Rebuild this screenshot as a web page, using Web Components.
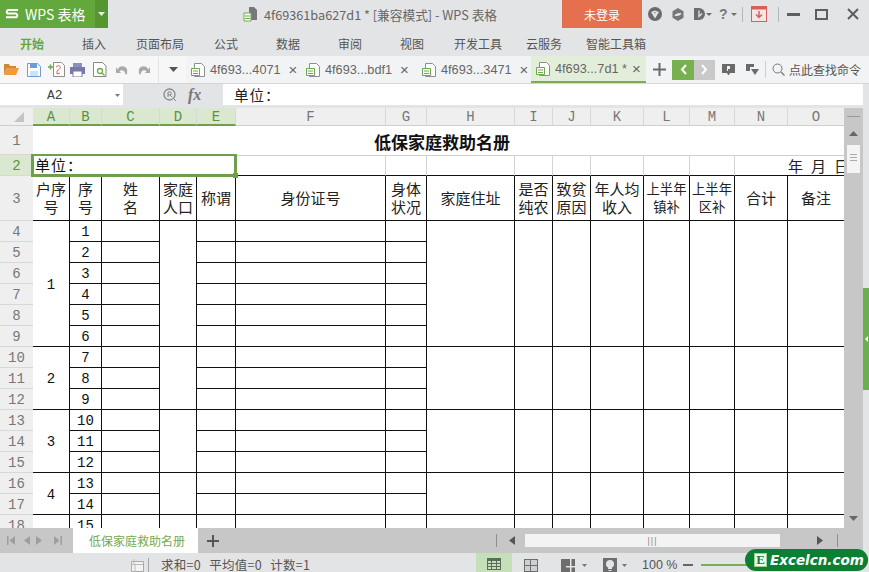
<!DOCTYPE html>
<html>
<head>
<meta charset="utf-8">
<title>WPS 表格</title>
<style>
    html, body { margin: 0; height: 572px; overflow: hidden; background: #e3e4e6; }
    body { font-family: "Noto Sans CJK SC", "Liberation Sans", sans-serif; width: 869px; position: relative; }
</style>
</head>
<body>
<wps-titlebar></wps-titlebar>
<wps-menubar></wps-menubar>
<wps-tabstrip></wps-tabstrip>
<wps-formula></wps-formula>
<wps-sheet></wps-sheet>
<wps-sheetbar></wps-sheetbar>
<wps-status></wps-status>
<site-badge></site-badge>

<script>
class WpsTitlebar extends HTMLElement {
    constructor() {
        super();
        this.attachShadow({ mode: 'open' }).innerHTML = `
        <style>
            :host { display: flex; height: 28px; align-items: stretch; color: #666; font-size: 12.7px; }
            .brand { width: 95px; background: #62a83c; color: #fff; display: flex; align-items: center; gap: 6px; padding-left: 5px; box-sizing: border-box; font-size: 14px; white-space: nowrap; }
            .drop { width: 13px; background: #55962f; display: flex; align-items: center; justify-content: center; }
            .title { flex: 1; display: flex; align-items: center; padding-left: 135px; gap: 6px; white-space: nowrap; }
            .login { width: 80px; background: #e4704e; color: #fff; font-size: 12px; display: flex; align-items: center; justify-content: center; }
            .tools { width: 227px; display: flex; align-items: center; box-sizing: border-box; padding-left: 6px; }
            svg { display: block; flex: none; }
            .sep { width: 1px; height: 15px; background: #b5b5b5; }
        </style>
        <div class="brand">
            <svg width="14" height="12" viewBox="0 0 14 12"><path d="M13 2H3.500a1.600 1.600 0 0 0 0 3.600h7a1.600 1.600 0 0 1 0 3.600H1" fill="none" stroke="#fff" stroke-width="2"/></svg>
            <span>WPS 表格</span>
        </div>
        <div class="drop"><svg width="7" height="4"><path d="M0 0h7L3.500 4z" fill="#e8f2df"/></svg></div>
        <div class="title">
            <svg width="15" height="16" viewBox="0 0 15 16"><path d="M6 1h5l3 3v10H6z" fill="#77777b"/><path d="M1 7h7v8H1z" fill="#fff" stroke="#6fa84c"/><path d="M2 10h5M2 12.500h5" stroke="#6fa84c"/></svg>
            <span>4f69361ba627d1 * [兼容模式] - WPS 表格</span>
        </div>
        <div class="login">未登录</div>
        <div class="tools">
            <svg width="14" height="14" viewBox="0 0 14 14"><circle cx="7" cy="7" r="7" fill="#6b6b6e"/><path d="M3 5l4-1.500L11 5 7 11.500z" fill="#e3e4e6"/><path d="M7 6.500l1.500-1H5.500z" fill="#6b6b6e"/></svg>
            <svg width="12" height="13" viewBox="0 0 12 13" style="margin-left:10px"><path d="M6 0l5.500 3.200v6.600L6 13 .5 9.800V3.200z" fill="#77777a"/><path d="M2.500 8c1-3 4-3 7-3-1 3-4 3-7 3z" fill="#e3e4e6"/></svg>
            <svg width="12" height="14" viewBox="0 0 12 14" style="margin-left:10px"><path d="M0 1h5a6 6 0 0 1 0 12H0z" fill="#6d6d70"/><path d="M5 3.500v6l3-3" fill="none" stroke="#e3e4e6" stroke-width="1.300"/></svg>
            <svg width="6" height="3"><path d="M0 0h6L3 3z" fill="#6d6d70"/></svg>
            <span style="margin-left:7px;font:700 14px 'Liberation Sans',sans-serif;color:#77777a">?</span>
            <svg width="6" height="3" style="margin-left:3px"><path d="M0 0h6L3 3z" fill="#6d6d70"/></svg>
            <span class="sep" style="margin-left:5px"></span>
            <svg width="16" height="16" viewBox="0 0 16 16" style="margin-left:8px"><rect x=".5" y=".5" width="15" height="15" fill="#f4e6e4" stroke="#d9605a"/><path d="M1 .5h14v3H1z" fill="#d9605a"/><path d="M8 5v6M5 8.500l3 3 3-3" fill="none" stroke="#d9605a" stroke-width="1.500"/></svg>
            <span class="sep" style="margin-left:11px"></span>
            <svg width="13" height="3" style="margin-left:8px"><path d="M0 0h13v3H0z" fill="#5e5e60"/></svg>
            <svg width="13" height="11" viewBox="0 0 13 11" style="margin-left:15px"><rect x="1" y="1" width="11" height="9" fill="none" stroke="#5e5e60" stroke-width="2"/></svg>
            <svg width="12" height="12" viewBox="0 0 12 12" style="margin-left:19px"><path d="M1 1l10 10M11 1L1 11" stroke="#5e5e60" stroke-width="2"/></svg>
        </div>`;
    }
}

class WpsMenubar extends HTMLElement {
    constructor() {
        super();
        const items = [['开始', 20], ['插入', 82], ['页面布局', 136], ['公式', 214], ['数据', 276], ['审阅', 338], ['视图', 400], ['开发工具', 454], ['云服务', 526], ['智能工具箱', 586]];
        // widths are the distance to the next label, so it stays in flow
        const html = items.map(([t, x], i) => {
            const next = items[i + 1] ? items[i + 1][1] : x + 70;
            return `<span class="${i === 0 ? 'on' : ''}" style="width:${next - x}px">${t}</span>`;
        }).join('');
        this.attachShadow({ mode: 'open' }).innerHTML = `
        <style>
            :host { display: flex; height: 28px; align-items: center; padding: 3px 0 0 20px; font-size: 12px; color: #555; box-sizing: border-box; }
            span { flex: none; white-space: nowrap; }
            .on { color: #6aa53c; font-weight: 700; }
        </style>${html}`;
    }
}

const DOC_ICON = `<svg width="14" height="14" viewBox="0 0 14 14" style="flex:none"><path d="M3.500.5h7l3 3v10h-10z" fill="#fff" stroke="#8e8e8e"/><path d="M.5 5.500h8v7h-8z" fill="#fff" stroke="#6fa84c"/><path d="M2 8h5M2 10.500h5" stroke="#6fa84c"/></svg>`;

class WpsTab extends HTMLElement {
    constructor() {
        super();
        this.attachShadow({ mode: 'open' }).innerHTML = `
        <style>
            :host { display: flex; align-items: center; height: 27px; width: 115px; box-sizing: border-box; padding-left: 5px; gap: 5px; color: #666; font: 12.700px "Liberation Sans", sans-serif; white-space: nowrap; flex: none; }
            :host([active]) { background: #e3eeda; border-bottom: 2px solid #78ae55; }
            .x { font-size: 15px; margin-left: 3px; color: #666; }
            :host([active]) .x { margin-left: 0; }
        </style>
        ${DOC_ICON}<slot></slot><span class="x">×</span>`;
    }
}

class WpsTabstrip extends HTMLElement {
    constructor() {
        super();
        this.attachShadow({ mode: 'open' }).innerHTML = `
        <style>
            :host { display: flex; height: 28px; background: #f2f3f4; align-items: flex-start; box-sizing: border-box; border-bottom: 1px solid #d6d6d6; }
            svg { display: block; flex: none; }
            .quick { width: 186px; height: 27px; background: #f7f7f7; display: flex; align-items: center; box-sizing: border-box; padding-left: 4px; flex: none; }
            .tabs { display: flex; }
            .right { display: flex; align-items: center; height: 27px; flex: 1; }
            .nav { height: 20px; display: flex; align-items: center; justify-content: center; }
            .find { font-size: 12px; color: #555; margin-left: 4px; white-space: nowrap; }
            .sep { width: 1px; height: 17px; background: #cfcfcf; }
        </style>
        <div class="quick">
            <svg width="15" height="13" viewBox="0 0 15 13"><path d="M0 1h5l1 2h6v2H3L0 12z" fill="#c98a3a"/><path d="M3 5h12l-3 7H0z" fill="#f29a3d"/></svg>
            <svg width="14" height="14" viewBox="0 0 14 14" style="margin-left:8px"><path d="M.5.5h10l3 3v10H.5z" fill="#fff" stroke="#6f9bd6"/><path d="M3 1h7v4H3z" fill="#6f9bd6"/><path d="M3 8h8v5H3z" fill="#cfe0f3"/></svg>
            <svg width="17" height="15" viewBox="0 0 17 15" style="margin-left:7px"><path d="M5.500.5h8l3 3v11h-11z" fill="#fff" stroke="#8e8e8e"/><path d="M8 5c3-3 6 0 3 2.500L9 9v3M9 12l3-1" fill="none" stroke="#d9605a"/><path d="M0 5h5M2.500 2.500v5" stroke="#6fa84c" stroke-width="1.500"/></svg>
            <svg width="15" height="14" viewBox="0 0 15 14" style="margin-left:5px"><path d="M3 0h9v4H3z" fill="#8d8fb8"/><path d="M0 4h15v7H0z" fill="#777aa8"/><path d="M3 8h9v6H3z" fill="#fff" stroke="#777aa8"/></svg>
            <svg width="14" height="15" viewBox="0 0 14 15" style="margin-left:8px"><path d="M.5.5h9l3.500 3.500v10.500H.5z" fill="#fff" stroke="#888"/><circle cx="7" cy="9" r="2.500" fill="none" stroke="#6fa84c" stroke-width="1.300"/><path d="M9 11l2.500 2.500" stroke="#6fa84c" stroke-width="1.300"/></svg>
            <svg width="12" height="12" viewBox="0 0 14 13" style="margin-left:9px"><path d="M2 6c2-5 9-5 11 0v5l-2 1c0-4-4-7-7-4l2 2H0V3z" fill="#a9a9ab"/></svg>
            <svg width="12" height="12" viewBox="0 0 14 13" style="transform:scaleX(-1);margin-left:10px"><path d="M2 6c2-5 9-5 11 0v5l-2 1c0-4-4-7-7-4l2 2H0V3z" fill="#a9a9ab"/></svg>
            <span class="sep" style="margin-left:8px;height:26px;background:#e3e3e3"></span>
            <svg width="9" height="5" style="margin-left:10px"><path d="M0 0h9L4.500 5z" fill="#555"/></svg>
        </div>
        <div class="tabs">
            <wps-tab>4f693...4071</wps-tab>
            <wps-tab style="width:116px">4f693...bdf1</wps-tab>
            <wps-tab style="width:114px">4f693...3471</wps-tab>
            <wps-tab active>4f693...7d1 *</wps-tab>
        </div>
        <div class="right">
            <svg width="13" height="13" style="margin-left:7px"><path d="M5.500 0h2v5.500H13v2H7.500V13h-2V7.500H0v-2h5.500z" fill="#6a6a6a"/></svg>
            <div class="nav" style="margin-left:6px;width:22px;background:#76b04f"><svg width="7" height="11"><path d="M6 1L2 5.500 6 10" fill="none" stroke="#fff" stroke-width="2"/></svg></div>
            <div class="nav" style="width:21px;background:#c9c9c9"><svg width="7" height="11"><path d="M1 1l4 4.500L1 10" fill="none" stroke="#fff" stroke-width="2"/></svg></div>
            <svg width="13" height="13" viewBox="0 0 13 13" style="margin-left:7px"><path d="M0 1h13v9H8l-1 2H6L5 10H0z" fill="#6a6a6a"/><path d="M5 3h3v3H6v2H5z" fill="#f2f3f4"/></svg>
            <svg width="13" height="11" viewBox="0 0 13 11" style="margin-left:11px"><path d="M0 0h8v3H4v4H0z" fill="#6a6a6a"/><path d="M5 5h8l-4 6z" fill="#6a6a6a"/></svg>
            <span class="sep" style="margin-left:6px"></span>
            <svg width="13" height="13" viewBox="0 0 13 13" style="margin-left:6px"><circle cx="5.500" cy="5.500" r="4.500" fill="none" stroke="#777"/><path d="M9 9l3.500 3.500" stroke="#777" stroke-width="1.300"/></svg>
            <span class="find">点此查找命令</span>
        </div>`;
    }
}

class WpsFormula extends HTMLElement {
    constructor() {
        super();
        this.attachShadow({ mode: 'open' }).innerHTML = `
        <style>
            :host { display: flex; height: 24px; align-items: stretch; box-sizing: border-box; padding: 0 0 3px; background: #e3e4e6; color: #333; }
            .name { width: 123px; background: #fff; display: flex; align-items: center; padding: 2px 0 0 47px; box-sizing: border-box; font: 13px "Liberation Mono", monospace; color: #444; }
            .name svg { margin-left: auto; margin-right: 3px; }
            .mid { width: 100px; display: flex; align-items: center; box-sizing: border-box; padding-left: 40px; gap: 11px; color: #777; }
            .mid i { font: italic 700 16px "Liberation Serif", serif; color: #777; }
            .box { width: 640px; background: #fff; display: flex; align-items: center; padding-left: 11px; box-sizing: border-box; font-size: 14.500px; letter-spacing: 1px; color: #222; }
        </style>
        <div class="name">A2<svg width="5" height="3"><path d="M0 0h5L2.500 3z" fill="#777"/></svg></div>
        <div class="mid">
            <svg width="14" height="14" viewBox="0 0 14 14"><circle cx="6.500" cy="6.500" r="5.500" fill="none" stroke="#888" stroke-width="1.300"/><path d="M5 9V4h2a1.300 1.300 0 0 1 0 2.800H5M7 7l2 2M10 10l3 3" fill="none" stroke="#888"/></svg>
            <i>fx</i>
        </div>
        <div class="box">单位：</div>`;
    }
}

// Column widths and row heights of the visible part of the sheet
const COLS = [33, 37, 32, 58, 37, 39, 150, 41, 88, 38, 38, 53, 46, 45, 53, 57];
const ROWS = [18, 29, 21, 45, 21, 21, 21, 21, 21, 21, 21, 21, 21, 21, 21, 21, 21, 21, 21];
const LETTERS = 'ABCDEFGHIJKLMNO'.split('');

class WpsSheet extends HTMLElement {
    constructor() {
        super();
        const cells = [];
        const put = (c, r, text, cls = '', cs = 1, rs = 1) => {
            cells.push(`<div class="c ${cls}" style="grid-column:${c + 1}/span ${cs};grid-row:${r + 1}/span ${rs}">${text}</div>`);
        };
        // corner and headers
        cells.push(`<div class="corner" style="grid-column:1;grid-row:1"><svg width="10" height="10"><path d="M10 0v10H0z" fill="#c4c4c4"/></svg></div>`);
        LETTERS.forEach((l, i) => put(i + 1, 0, l, 'ch' + (i < 5 ? ' sel' : '')));
        ROWS.slice(1).forEach((h, i) => put(0, i + 1, i + 1, 'rh' + (i === 1 ? ' sel' : '')));
        // row 1 and 2
        put(1, 1, '低保家庭救助名册', 'title', 15);
        put(1, 2, '单位：', 'unit', 5);
        [6, 7, 8, 9, 10, 11, 12, 13].forEach((c) => put(c, 2, '', 'faint'));
        put(14, 2, '<span>年</span><span>月</span><span>日</span>', 'date', 2);
        // column heads
        ['户序<br>号', '序<br>号', '姓<br>名', '家庭<br>人口', '称谓', '身份证号', '身体<br>状况', '家庭住址', '是否<br>纯农', '致贫<br>原因', '年人均<br>收入', '<small>上半年<br>镇补</small>', '<small>上半年<br>区补</small>', '合计', '备注']
            .forEach((t, i) => put(i + 1, 3, t, 'b head'));
        // family groups: household no, first row index, row span
        [['1', 4, 6], ['2', 10, 3], ['3', 13, 3], ['4', 16, 2], ['', 18, 1]].forEach(([no, r, span]) => {
            put(1, r, no, 'b num', 1, span);
            [4, 8, 9, 10, 11, 12, 13, 14, 15].forEach((c) => put(c, r, '', 'b', 1, span));
        });
        // person rows
        for (let i = 0; i < 15; i++) {
            const r = 4 + i;
            put(2, r, i + 1, 'b num');
            [3, 5, 6, 7].forEach((c) => put(c, r, '', 'b'));
        }
        this.attachShadow({ mode: 'open' }).innerHTML = `
        <style>
            :host { display: block; height: 420px; position: relative; overflow: hidden; background: #fff; }
            .grid { display: grid; grid-template-columns: ${COLS.map((w) => w + 'px').join(' ')}; grid-template-rows: ${ROWS.map((h) => h + 'px').join(' ')}; width: 845px; font-size: 15px; color: #222; }
            .c { box-sizing: border-box; display: flex; align-items: center; justify-content: center; text-align: center; line-height: 18px; overflow: hidden; min-width: 0; white-space: nowrap; }
            .corner { background: #efefef; border-bottom: 1px solid #cfcfcf; display: flex; align-items: center; justify-content: center; box-sizing: border-box; padding-left: 4px; }
            .ch { background: #efefef; border-right: 1px solid #d8d8d8; border-bottom: 1px solid #cfcfcf; color: #777; font: 14px "Liberation Mono", monospace; padding-top: 1px; }
            .ch.sel { background: #d9e8cf; color: #5f8f42; border-bottom: 2px solid #6f9f4d; }
            .rh { background: #efefef; color: #777; border-bottom: 1px solid #d8d8d8; font: 14px "Liberation Mono", monospace; padding-top: 2px; }
            .rh.sel { background: #d9e8cf; color: #5f8f42; }
            .title { font-weight: 700; font-size: 17px; color: #111; padding: 2px 0 0 6px; }
            .unit { justify-content: flex-start; padding-left: 2px; letter-spacing: 1px; color: #111; border-bottom: 1px solid #111; }
            .faint { border-right: 1px solid #d4d4d4; border-top: 1px solid #cfcfcf; border-bottom: 1px solid #111; }
            .date { justify-content: flex-start; padding-left: 53px; gap: 8px; border-top: 1px solid #cfcfcf; border-bottom: 1px solid #111; }
            .date span { flex: none; }
            .b { border-right: 1px solid #111; border-bottom: 1px solid #111; }
            .head { white-space: normal; }
            .head small { font-size: 13.300px; }
            .num { font: 14px "Liberation Mono", monospace; color: #111; padding-top: 2px; }
            .frame { position: absolute; left: 31px; top: 46px; width: 206px; height: 23px; box-sizing: border-box; border: 3px solid #6f9f4d; border-width: 2px 3px 3px 3px; }
            .frame::after { content: ""; position: absolute; right: -4px; bottom: -4px; width: 5px; height: 5px; background: #6f9f4d; }
            .scroll { position: absolute; right: 0; top: 0; bottom: 0; width: 25px; background: #e3e4e6; }
            .track { position: absolute; left: 0; top: 0; bottom: 0; width: 19px; background: #c7c7c7; }
            .grip { position: absolute; left: 3px; top: 8px; width: 13px; height: 1px; background: #9a9a9a; }
            .thumb { position: absolute; left: 3px; top: 37px; width: 13px; height: 28px; background: #f4f4f4; box-sizing: border-box; padding: 9px 3px; }
            .thumb i { display: block; height: 1px; margin-bottom: 2px; background: #aaa; }
            .up, .down { position: absolute; left: 5px; }
            .up { top: 23px; } .down { bottom: 7px; }
            .tag { position: absolute; right: 0; top: 180px; width: 6px; height: 102px; background: #6ab04c; display: flex; align-items: center; justify-content: center; }
        </style>
        <div class="grid">${cells.join('')}</div>
        <div class="frame"></div>
        <div class="scroll">
            <div class="track">
                <div class="grip"></div>
                <svg class="up" width="9" height="5"><path d="M4.500 0L9 5H0z" fill="#666"/></svg>
                <div class="thumb"><i></i><i></i><i></i></div>
                <svg class="down" width="9" height="5"><path d="M0 0h9L4.500 5z" fill="#666"/></svg>
            </div>
            <div class="tag"><svg width="3" height="6"><path d="M3 0v6L0 3z" fill="#fff"/></svg></div>
        </div>`;
    }
}

class WpsSheetbar extends HTMLElement {
    constructor() {
        super();
        this.attachShadow({ mode: 'open' }).innerHTML = `
        <style>
            :host { display: flex; height: 25px; background: #c7c7c7; align-items: stretch; box-shadow: inset -6px 0 #e3e4e6; }
            svg { display: block; flex: none; }
            .nav { width: 73px; display: flex; align-items: center; padding-left: 7px; box-sizing: border-box; gap: 9px; }
            .tab { width: 125px; background: #fff; color: #75a84f; font-size: 12px; display: flex; align-items: center; justify-content: center; white-space: nowrap; padding-left: 3px; box-sizing: border-box; }
            .plus { width: 30px; display: flex; align-items: center; justify-content: center; }
            .rest { flex: 1; display: flex; align-items: center; }
            .bar { height: 13px; background: #f3f3f3; width: 255px; margin-left: 10px; display: flex; align-items: center; justify-content: center; color: #888; font: 9px "Liberation Sans", sans-serif; letter-spacing: 1px; }
            .sep { width: 1px; height: 13px; background: #8f8f8f; }
        </style>
        <div class="nav">
            <svg width="8" height="9"><path d="M0 0h1.500v9H0zM8 0v9L2.500 4.500z" fill="#9e9e9e"/></svg>
            <svg width="6" height="9"><path d="M6 0v9L0 4.500z" fill="#9e9e9e"/></svg>
            <svg width="6" height="9" style="margin-left:-3px"><path d="M0 0v9l6-4.500z" fill="#9e9e9e"/></svg>
            <svg width="8" height="9" style="margin-left:3px"><path d="M0 0v9l5.500-4.500zM6.500 0H8v9H6.500z" fill="#9e9e9e"/></svg>
        </div>
        <div class="tab">低保家庭救助名册</div>
        <div class="plus"><svg width="12" height="12"><path d="M5 0h2v5h5v2H7v5H5V7H0V5h5z" fill="#555"/></svg></div>
        <div class="rest">
            <span class="sep" style="margin-left:268px"></span>
            <svg width="6" height="9" style="margin-left:12px"><path d="M6 0v9L0 4.500z" fill="#555"/></svg>
            <div class="bar">|||</div>
            <svg width="6" height="9" style="margin-left:37px"><path d="M0 0v9l6-4.500z" fill="#555"/></svg>
            <span class="sep" style="margin-left:14px"></span>
        </div>`;
    }
}

class WpsStatus extends HTMLElement {
    constructor() {
        super();
        this.attachShadow({ mode: 'open' }).innerHTML = `
        <style>
            :host { display: flex; height: 19px; align-items: center; box-sizing: border-box; padding-left: 131px; font-size: 12.500px; color: #555; white-space: nowrap; background: #e3e4e6; }
            svg { display: block; flex: none; }
            .sum { width: 327px; flex: none; box-sizing: border-box; padding: 4px 0 0 12px; letter-spacing: .3px; word-spacing: 5px; }
            .v { width: 36px; align-self: stretch; display: flex; align-items: center; justify-content: center; background: #c5dfb8; padding-top: 3px; box-sizing: border-box; }
            .sep { width: 1px; height: 14px; background: #a5a5a5; }
            .low { margin-top: 5px; }
        </style>
        <svg class="low" width="13" height="14" viewBox="0 0 13 14"><path d="M.5 3.500h12v10H.5z" fill="#f3f3f3" stroke="#aaa"/><path d="M3 1v5M0 6.500h12M4 6.500v7" stroke="#bbb"/></svg>
        <span class="sep low" style="margin-left:4px"></span>
        <span class="sum">求和=0 平均值=0 计数=1</span>
        <div class="v"><svg width="14" height="12"><path d="M0 0h14v12H0z" fill="#5d6b58"/><path d="M1 3h3v2H1zM5 3h4v2H5zM10 3h3v2h-3zM1 6h3v2H1zM5 6h4v2H5zM10 6h3v2h-3zM1 9h3v2H1zM5 9h4v2H5zM10 9h3v2h-3z" fill="#c5dfb8"/></svg></div>
        <svg class="low" width="14" height="13" style="margin-left:12px"><path d="M0 0h14v13H0z" fill="#6d6d6d"/><path d="M1 1h5v5H1zM7 1h6v5H7zM1 7h5v5H1zM7 7h6v5H7z" fill="#cfd0d2"/></svg>
        <svg class="low" width="14" height="13" style="margin-left:23px"><path d="M0 0h14v13H0z" fill="#6d6d6d"/><path d="M9 0h1.500v7H14v1.500h-3.500V13H9V8.500H5V7h4z" fill="#e3e4e6"/></svg>
        <svg class="low" width="5" height="3" style="margin-left:7px"><path d="M0 0h5L2.500 3z" fill="#777"/></svg>
        <span class="low" style="width:14px;height:14px;margin-left:16px;background:#6d6d6d;display:flex;align-items:center;justify-content:center"><svg width="8" height="11"><path d="M4 0a4 4 0 0 1 2 7.500V9H2V7.500A4 4 0 0 1 4 0zM2.500 10h3v1h-3z" fill="#e3e4e6"/></svg></span>
        <svg class="low" width="5" height="3" style="margin-left:5px"><path d="M0 0h5L2.500 3z" fill="#777"/></svg>
        <span class="low" style="margin-left:15px;font:12.500px 'Liberation Sans',sans-serif">100 %</span>
        <span class="low" style="width:10px;height:2px;background:#666;margin-left:6px"></span>
        <span class="low" style="width:60px;height:2px;background:#76b04f;margin-left:8px"></span>`;
    }
}

class SiteBadge extends HTMLElement {
    constructor() {
        super();
        this.attachShadow({ mode: 'open' }).innerHTML = `
        <style>
            :host { position: absolute; left: 745px; top: 549px; width: 123px; height: 22px; background: #0c7f32; border-radius: 11px; display: flex; align-items: center; box-sizing: border-box; padding-left: 9px; color: #fff; }
            .e { width: 13px; height: 14px; background: #f3fff0; color: #0c7f32; font: 700 13px/12px "Liberation Serif", serif; text-align: center; border: 1px solid #9fd08a; box-sizing: border-box; flex: none; }
            .t { font: italic 700 13.500px "DejaVu Sans", "Liberation Sans", sans-serif; margin-left: 3px; white-space: nowrap; }
        </style>
        <span class="e">E</span><span class="t">Excelcn.com</span>`;
    }
}

customElements.define('wps-titlebar', WpsTitlebar);
customElements.define('wps-menubar', WpsMenubar);
customElements.define('wps-tab', WpsTab);
customElements.define('wps-tabstrip', WpsTabstrip);
customElements.define('wps-formula', WpsFormula);
customElements.define('wps-sheet', WpsSheet);
customElements.define('wps-sheetbar', WpsSheetbar);
customElements.define('wps-status', WpsStatus);
customElements.define('site-badge', SiteBadge);
</script>
</body>
</html>
